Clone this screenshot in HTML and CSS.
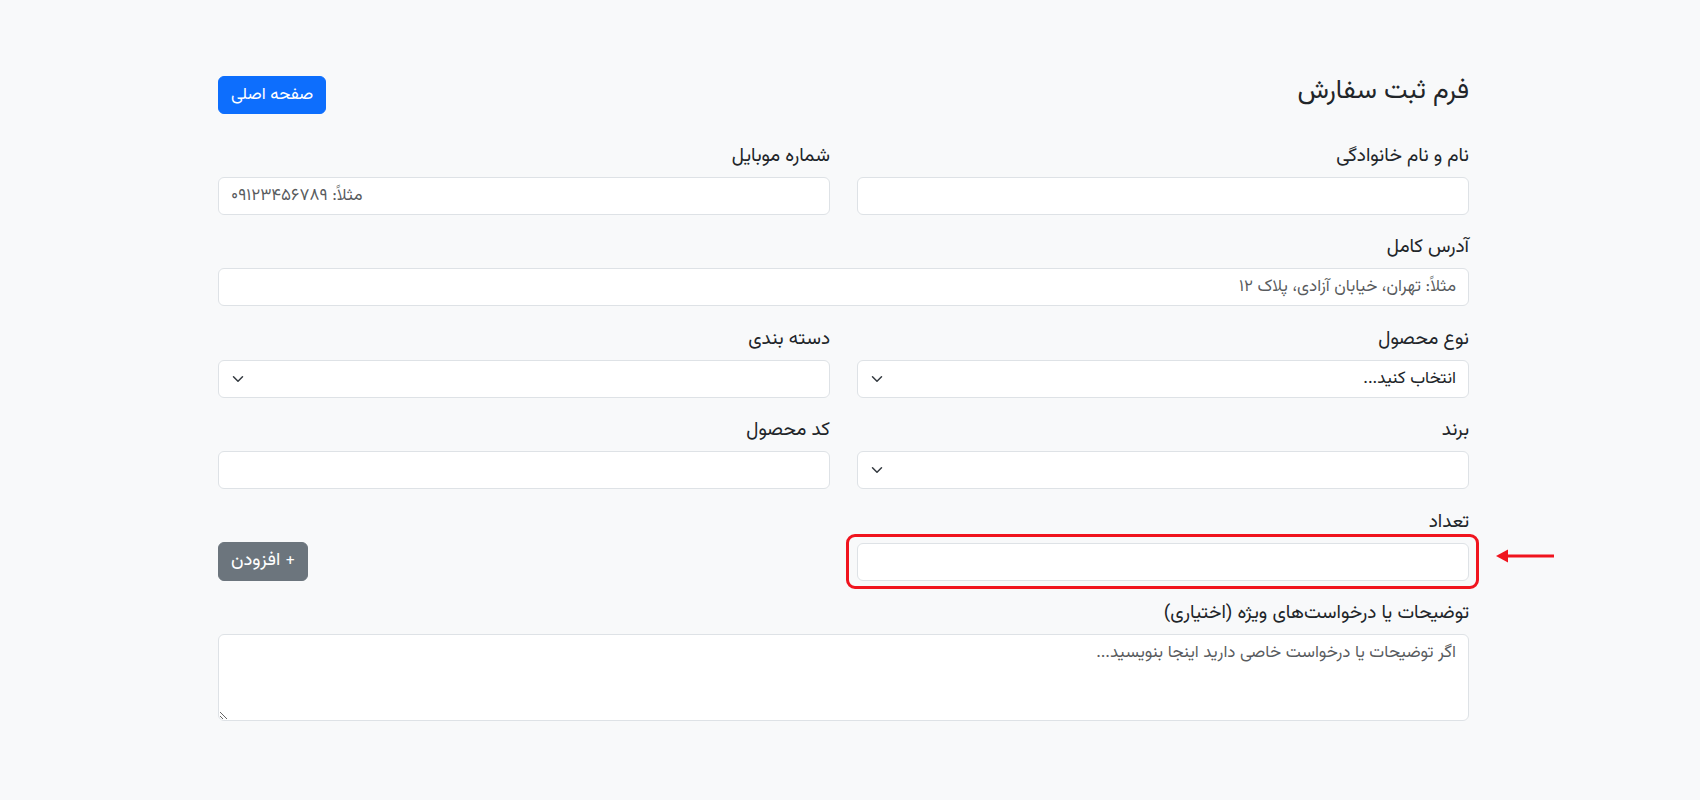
FILE: index.html
```html
<!DOCTYPE html>
<html lang="fa" dir="rtl">
<head>
<meta charset="utf-8">
<title>فرم ثبت سفارش</title>
<link rel="stylesheet" href="styles.css">
</head>
<body>
<div class="page">
  <div class="header">
    <h4 class="title">فرم ثبت سفارش</h4>
    <a class="btn btn-primary" href="#">صفحه اصلی</a>
  </div>
  <form class="grid">
    <div class="field">
      <label class="label">نام و نام خانوادگی</label>
      <input class="control" type="text">
    </div>
    <div class="field">
      <label class="label">شماره موبایل</label>
      <input class="control control-left" type="tel" placeholder="مثلاً: ۰۹۱۲۳۴۵۶۷۸۹">
    </div>
    <div class="field full">
      <label class="label">آدرس کامل</label>
      <input class="control" type="text" placeholder="مثلاً: تهران، خیابان آزادی، پلاک ۱۲">
    </div>
    <div class="field">
      <label class="label">نوع محصول</label>
      <div class="select-wrap">
        <select class="control select"><option>انتخاب کنید...</option></select>
        <svg class="chevron" width="16" height="12" viewBox="0 0 16 16"><path d="M2 5l6 6 6-6" fill="none" stroke="#343a40" stroke-width="2" stroke-linecap="round" stroke-linejoin="round"/></svg>
      </div>
    </div>
    <div class="field">
      <label class="label">دسته بندی</label>
      <div class="select-wrap">
        <select class="control select"><option></option></select>
        <svg class="chevron" width="16" height="12" viewBox="0 0 16 16"><path d="M2 5l6 6 6-6" fill="none" stroke="#343a40" stroke-width="2" stroke-linecap="round" stroke-linejoin="round"/></svg>
      </div>
    </div>
    <div class="field">
      <label class="label">برند</label>
      <div class="select-wrap">
        <select class="control select"><option></option></select>
        <svg class="chevron" width="16" height="12" viewBox="0 0 16 16"><path d="M2 5l6 6 6-6" fill="none" stroke="#343a40" stroke-width="2" stroke-linecap="round" stroke-linejoin="round"/></svg>
      </div>
    </div>
    <div class="field">
      <label class="label">کد محصول</label>
      <input class="control" type="text">
    </div>
    <div class="field">
      <label class="label">تعداد</label>
      <div class="highlight">
        <input class="control" type="number">
        <svg class="arrow" width="60" height="16" viewBox="0 0 60 16"><path d="M58 8H10" stroke="#f0141e" stroke-width="3"/><path d="M0 8L12 1.5V14.5Z" fill="#f0141e"/></svg>
      </div>
    </div>
    <div class="field action">
      <button class="btn btn-secondary" type="button">+ افزودن</button>
    </div>
    <div class="field full">
      <label class="label">توضیحات یا درخواست‌های ویژه (اختیاری)</label>
      <textarea class="control textarea" rows="3" placeholder="اگر توضیحات یا درخواست خاصی دارید اینجا بنویسید..."></textarea>
    </div>
  </form>
</div>
</body>
</html>
```

FILE: styles.css
```css
html, body {
  margin: 0;
  padding: 0;
}
body {
  background: #f8f9fa;
  color: #212529;
  font-family: "Vazirmatn", "Noto Sans Arabic", "DejaVu Sans", sans-serif;
  font-size: 16px;
  line-height: 24px;
}
.page {
  width: 1251px;
  margin: 0 231px 0 218px;
  padding-top: 76px;
}
.header {
  display: flex;
  justify-content: space-between;
  align-items: center;
  margin-bottom: 31px;
}
.title {
  margin: 0 0 8px 0;
  font-size: 26.5px;
  font-weight: 400;
  line-height: 29px;
}
.btn {
  display: inline-block;
  box-sizing: border-box;
  height: 38px;
  padding: 6px 12px;
  border: 1px solid transparent;
  border-radius: 6px;
  font-family: inherit;
  font-size: 17px;
  line-height: 24px;
  color: #fff;
  text-decoration: none;
  cursor: pointer;
}
.btn-primary {
  background: #0d6efd;
  border-color: #0d6efd;
}
.btn-secondary {
  background: #6c757d;
  border-color: #6c757d;
  height: 39px;
  font-size: 18.5px;
}
.grid {
  display: grid;
  grid-template-columns: 1fr 1fr;
  column-gap: 27px;
  row-gap: 21.4px;
}
.full {
  grid-column: 1 / -1;
}
.field {
  display: flex;
  flex-direction: column;
}
.label {
  display: block;
  margin-bottom: 8px;
  font-size: 19px;
  line-height: 24px;
}
.control {
  display: block;
  box-sizing: border-box;
  width: 100%;
  height: 38px;
  padding: 6px 12px;
  border: 1px solid #dee2e6;
  border-radius: 6px;
  background: #fff;
  font-family: inherit;
  font-size: 17px;
  line-height: 24px;
  color: #212529;
  outline: none;
}
.control-left {
  text-align: left;
}
.control::placeholder {
  color: rgba(33, 37, 41, 0.75);
}
.select {
  appearance: none;
  -webkit-appearance: none;
  padding-left: 36px;
}
.select-wrap {
  position: relative;
}
.chevron {
  position: absolute;
  left: 12px;
  top: 13px;
  pointer-events: none;
}
.highlight {
  position: relative;
}
.highlight::after {
  content: "";
  position: absolute;
  top: -9px;
  right: -10px;
  bottom: -8px;
  left: -11px;
  border: 3px solid #f0141e;
  border-radius: 9px;
  pointer-events: none;
}
.arrow {
  position: absolute;
  right: -87px;
  top: 5px;
}
.action {
  justify-content: flex-end;
  align-items: flex-end;
}
.textarea {
  height: 87px;
  resize: vertical;
}
input[type=number]::-webkit-inner-spin-button,
input[type=number]::-webkit-outer-spin-button {
  -webkit-appearance: none;
  margin: 0;
}
```
